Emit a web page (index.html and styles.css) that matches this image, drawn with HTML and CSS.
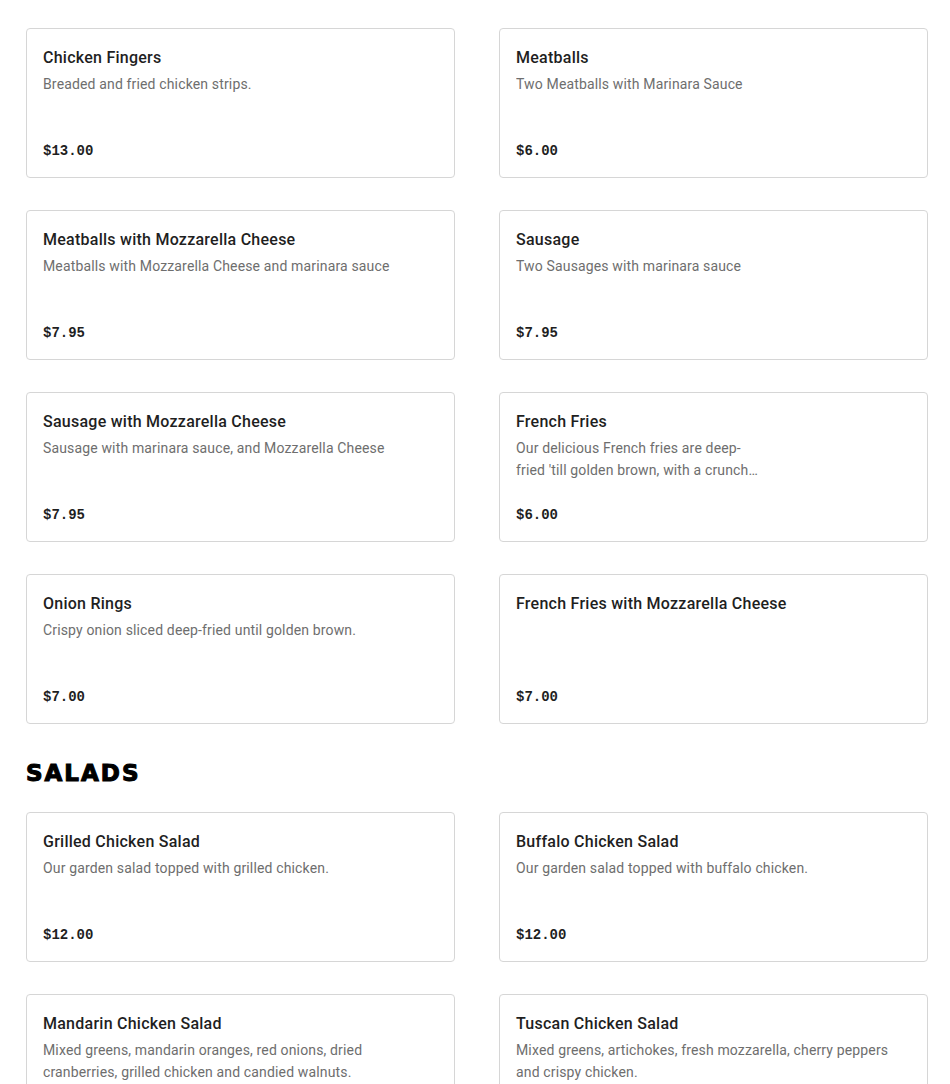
FILE: index.html
```html
<!DOCTYPE html>
<html lang="en">
<head>
<meta charset="utf-8">
<title>Menu</title>
<link rel="stylesheet" href="styles.css">
</head>
<body>
<main class="menu">
  <section class="section">
    <div class="grid">
      <article class="card"><h3 class="title">Chicken Fingers</h3><p class="desc">Breaded and fried chicken strips.</p><div class="price">$13.00</div></article>
      <article class="card"><h3 class="title">Meatballs</h3><p class="desc">Two Meatballs with Marinara Sauce</p><div class="price">$6.00</div></article>
      <article class="card"><h3 class="title">Meatballs with Mozzarella Cheese</h3><p class="desc">Meatballs with Mozzarella Cheese and marinara sauce</p><div class="price">$7.95</div></article>
      <article class="card"><h3 class="title">Sausage</h3><p class="desc">Two Sausages with marinara sauce</p><div class="price">$7.95</div></article>
      <article class="card"><h3 class="title">Sausage with Mozzarella Cheese</h3><p class="desc">Sausage with marinara sauce, and Mozzarella Cheese</p><div class="price">$7.95</div></article>
      <article class="card"><h3 class="title">French Fries</h3><p class="desc desc-narrow">Our delicious French fries are deep-fried 'till golden brown, with a crunchy outside and a fluffy inside, served hot.</p><div class="price">$6.00</div></article>
      <article class="card"><h3 class="title">Onion Rings</h3><p class="desc">Crispy onion sliced deep-fried until golden brown.</p><div class="price">$7.00</div></article>
      <article class="card"><h3 class="title">French Fries with Mozzarella Cheese</h3><p class="desc"></p><div class="price">$7.00</div></article>
    </div>
  </section>
  <section class="section">
    <h2 class="section-title">SALADS</h2>
    <div class="grid">
      <article class="card"><h3 class="title">Grilled Chicken Salad</h3><p class="desc">Our garden salad topped with grilled chicken.</p><div class="price">$12.00</div></article>
      <article class="card"><h3 class="title">Buffalo Chicken Salad</h3><p class="desc">Our garden salad topped with buffalo chicken.</p><div class="price">$12.00</div></article>
      <article class="card"><h3 class="title">Mandarin Chicken Salad</h3><p class="desc">Mixed greens, mandarin oranges, red onions, dried cranberries, grilled chicken and candied walnuts.</p><div class="price">$12.00</div></article>
      <article class="card"><h3 class="title">Tuscan Chicken Salad</h3><p class="desc">Mixed greens, artichokes, fresh mozzarella, cherry peppers and crispy chicken.</p><div class="price">$12.00</div></article>
    </div>
  </section>
</main>
</body>
</html>
```
FILE: styles.css
```css
* { box-sizing: border-box; }
html, body { margin: 0; padding: 0; background: #fff; }
body {
  font-family: Roboto, "Liberation Sans", Arial, sans-serif;
  color: #1f1f1f;
}
.menu {
  width: 902px;
  margin-left: 26px;
  padding-top: 28px;
}
.grid {
  display: grid;
  grid-template-columns: 429px 429px;
  column-gap: 44px;
  row-gap: 32px;
}
.section-title {
  margin: 35px 0 25px;
  font-family: "DejaVu Sans", sans-serif;
  font-weight: 700;
  font-size: 23px;
  line-height: 28px;
  letter-spacing: 2px;
  -webkit-text-stroke: 1.1px #000;
  color: #000;
}
.card {
  display: flex;
  flex-direction: column;
  height: 150px;
  padding: 16px;
  border: 1px solid #d6d6d6;
  border-radius: 4px;
  background: #fff;
}
.title {
  margin: 0;
  padding-top: 1px;
  font-size: 16px;
  line-height: 24px;
  font-weight: 500;
  letter-spacing: 0.25px;
  color: #1f1f1f;
}
.desc {
  margin: 3px 0 0;
  font-size: 14px;
  line-height: 22px;
  letter-spacing: 0.15px;
  color: #6e6e6e;
  display: -webkit-box;
  -webkit-line-clamp: 2;
  -webkit-box-orient: vertical;
  overflow: hidden;
}
.desc-narrow { max-width: 248px; }
.price {
  margin-top: auto;
  font-family: "Liberation Mono", "DejaVu Sans Mono", monospace;
  font-weight: 700;
  font-size: 14px;
  line-height: 20px;
  color: #1f1f1f;
}
```
